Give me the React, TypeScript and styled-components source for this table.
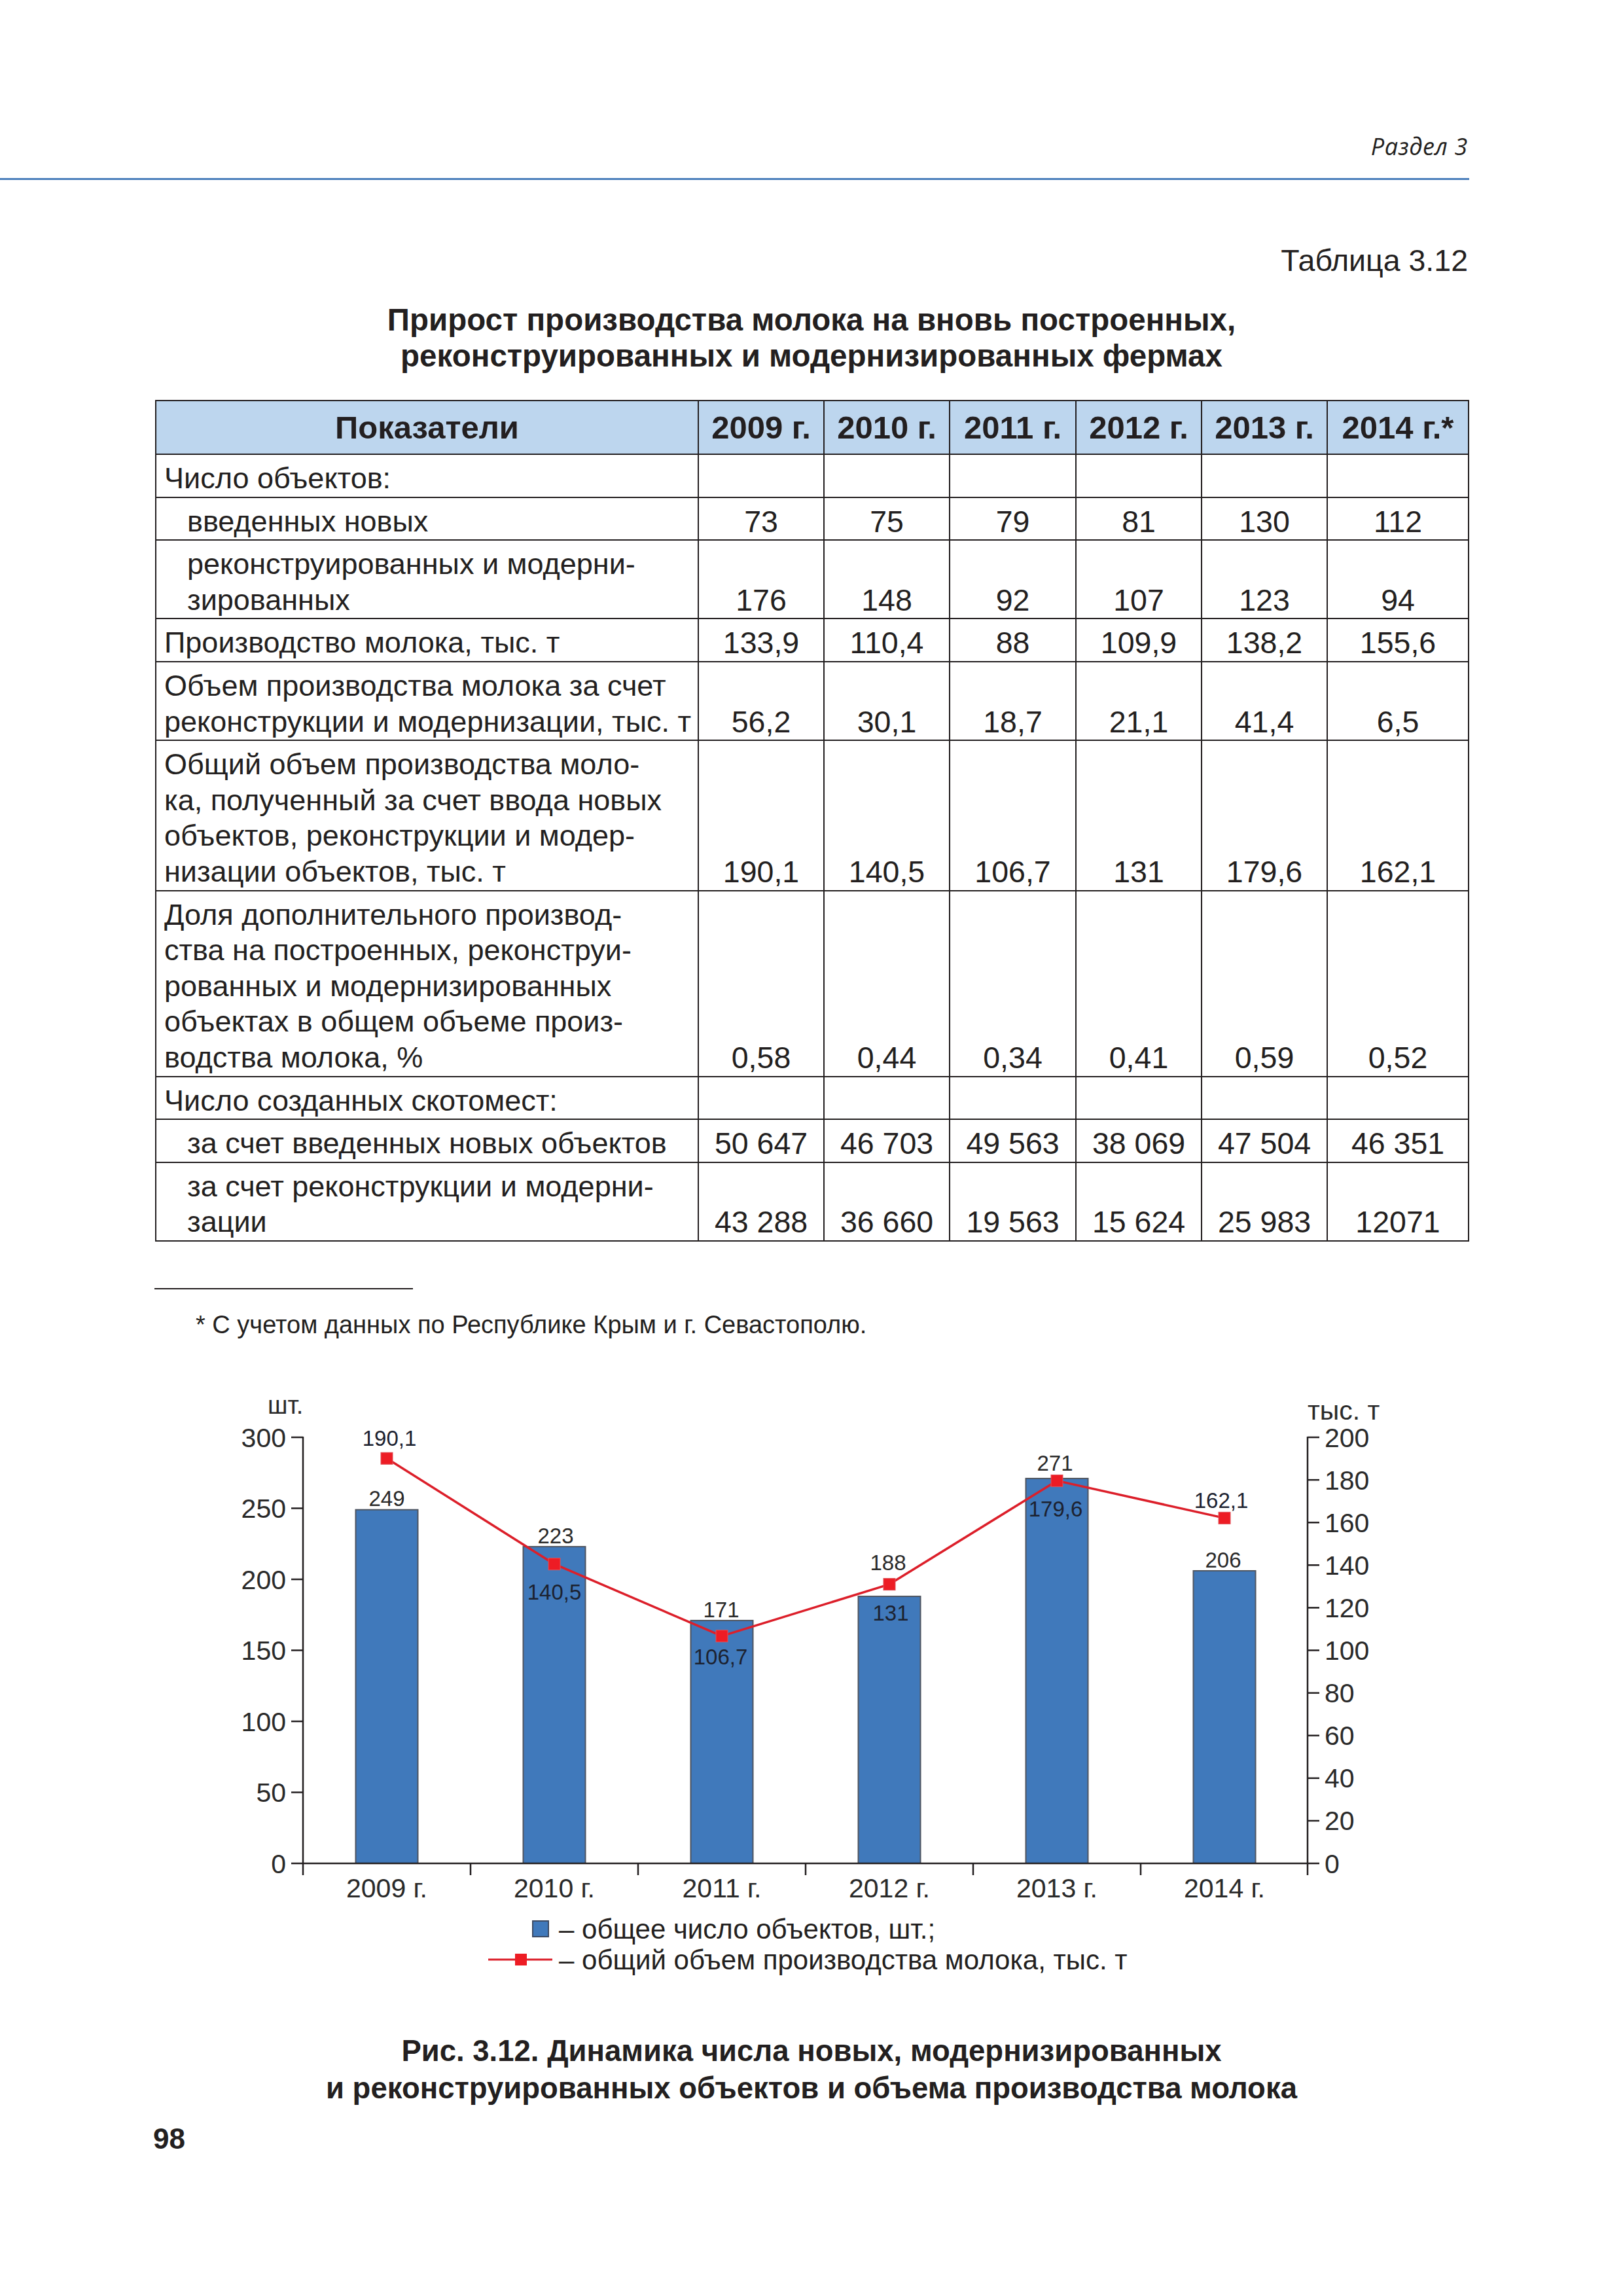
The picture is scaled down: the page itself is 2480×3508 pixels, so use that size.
import React from "react";
import styled, { createGlobalStyle } from "styled-components";

const GlobalStyle = createGlobalStyle`
  html, body { margin: 0; padding: 0; background: #ffffff; }
  body {
    font-family: "Liberation Sans", Arial, sans-serif;
    color: #231f20;
  }
`;

const Page = styled.div`
  width: 2480px;
  min-height: 3508px;
  background: #ffffff;
  box-sizing: border-box;
`;

const RunningHead = styled.header`
  width: 2245px;
  height: 272px;
  box-sizing: content-box;
  display: flex;
  justify-content: flex-end;
  align-items: flex-end;
  border-bottom: 3px solid #4a7ebb;
`;

const SectionLabel = styled.span`
  font-family: "Open Sans", "Liberation Sans", sans-serif;
  font-style: italic;
  font-size: 36px;
  line-height: 36px;
  letter-spacing: 0.6px;
  margin: 0 2px 30px 0;
  color: #231f20;
`;

const Content = styled.main`
  margin-left: 237px;
  width: 2006px;
  display: flex;
  flex-direction: column;
`;

const TableNumber = styled.div`
  margin-top: 101px;
  align-self: flex-end;
  font-size: 46.5px;
  line-height: 45px;
`;

const TableTitle = styled.h2`
  margin: 40px 0 0;
  text-align: center;
  font-size: 47.5px;
  line-height: 55px;
  font-weight: 700;
`;

const DataTable = styled.table`
  margin-top: 40px;
  width: 2006px;
  border-collapse: collapse;
  table-layout: fixed;
  font-size: 45px;
  line-height: 54.6px;
`;

const Col = styled.col<{ $w: number }>`
  width: ${(p) => p.$w}px;
`;

const HeadCell = styled.th`
  background: #bdd6ee;
  border: 2px solid #231f20;
  height: 80px;
  padding: 0;
  font-size: 49px;
  font-weight: 700;
  text-align: center;
  vertical-align: middle;
  white-space: nowrap;
`;

const LabelCell = styled.td<{ $indent?: boolean }>`
  border: 2px solid #231f20;
  padding: 9px 0 0 ${(p) => (p.$indent ? 47 : 12)}px;
  font-size: 45px;
  text-align: left;
  vertical-align: top;
  white-space: nowrap;
`;

const ValueCell = styled.td`
  border: 2px solid #231f20;
  padding: 0;
  font-size: 46.5px;
  text-align: center;
  vertical-align: bottom;
  white-space: nowrap;
`;

const FootnoteRule = styled.hr`
  margin: 71px 0 0 -1px;
  width: 395px;
  height: 2px;
  border: none;
  background: #231f20;
`;

const Footnote = styled.p`
  margin: 35px 0 0 62px;
  font-size: 38px;
  line-height: 38px;
`;

const ChartSvg = styled.svg`
  display: block;
  margin-top: 66px;
  font-family: "Liberation Sans", Arial, sans-serif;
`;

const Legend = styled.div`
  margin-top: 5px;
  display: grid;
  grid-template-columns: 607px auto;
  column-gap: 10px;
  align-items: center;
  font-size: 42px;
  line-height: 47px;
`;

const LegendMark = styled.span`
  justify-self: end;
  display: flex;
  align-items: center;
`;

const BarSwatch = styled.span`
  display: block;
  width: 22px;
  height: 22px;
  margin-right: 5px;
  background: #4079bb;
  border: 2px solid #3b4a63;
`;

const LegendText = styled.span`
  white-space: nowrap;
`;

const Caption = styled.h3`
  margin: 87px 0 0;
  text-align: center;
  font-size: 45.5px;
  line-height: 57px;
  font-weight: 700;
`;

const PageNumber = styled.div`
  margin: 27px 0 0 -3px;
  font-size: 44px;
  line-height: 44px;
  font-weight: 700;
`;

type Row = {
  label: string[];
  indent?: boolean;
  values: string[];
};

const years = ["2009 г.", "2010 г.", "2011 г.", "2012 г.", "2013 г.", "2014 г.*"];

const rows: Row[] = [
  { label: ["Число объектов:"], values: ["", "", "", "", "", ""] },
  { label: ["введенных новых"], indent: true, values: ["73", "75", "79", "81", "130", "112"] },
  {
    label: ["реконструированных и модерни-", "зированных"],
    indent: true,
    values: ["176", "148", "92", "107", "123", "94"],
  },
  { label: ["Производство молока, тыс. т"], values: ["133,9", "110,4", "88", "109,9", "138,2", "155,6"] },
  {
    label: ["Объем производства молока за счет", "реконструкции и модернизации, тыс. т"],
    values: ["56,2", "30,1", "18,7", "21,1", "41,4", "6,5"],
  },
  {
    label: [
      "Общий объем производства моло-",
      "ка, полученный за счет ввода новых",
      "объектов, реконструкции и модер-",
      "низации объектов, тыс. т",
    ],
    values: ["190,1", "140,5", "106,7", "131", "179,6", "162,1"],
  },
  {
    label: [
      "Доля дополнительного производ-",
      "ства на построенных, реконструи-",
      "рованных и модернизированных",
      "объектах в общем объеме произ-",
      "водства молока, %",
    ],
    values: ["0,58", "0,44", "0,34", "0,41", "0,59", "0,52"],
  },
  { label: ["Число созданных скотомест:"], values: ["", "", "", "", "", ""] },
  {
    label: ["за счет введенных новых объектов"],
    indent: true,
    values: ["50 647", "46 703", "49 563", "38 069", "47 504", "46 351"],
  },
  {
    label: ["за счет реконструкции и модерни-", "зации"],
    indent: true,
    values: ["43 288", "36 660", "19 563", "15 624", "25 983", "12071"],
  },
];

const colWidths = [829, 192, 192, 193, 192, 192, 216];

/* ---------- chart ---------- */
const X0 = 463;
const X1 = 1998;
const Y0 = 2848;
const KL = 651 / 300;
const KR = 651 / 200;
const CAT = 256;

const barValues = [249, 223, 171, 188, 271, 206];
const lineValues = [190.1, 140.5, 106.7, 131, 179.6, 162.1];
const barLabelPos = [
  { x: 591, y: 2302 },
  { x: 849, y: 2359 },
  { x: 1102, y: 2472 },
  { x: 1357, y: 2400 },
  { x: 1612, y: 2248 },
  { x: 1869, y: 2396 },
];
const lineLabelPos = [
  { x: 595, y: 2210, t: "190,1" },
  { x: 847, y: 2445, t: "140,5" },
  { x: 1101, y: 2544, t: "106,7" },
  { x: 1361, y: 2477, t: "131" },
  { x: 1613, y: 2318, t: "179,6" },
  { x: 1866, y: 2305, t: "162,1" },
];
const catLabels = ["2009 г.", "2010 г.", "2011 г.", "2012 г.", "2013 г.", "2014 г."];

const AXIS = "#231f20";
const LABEL = "#2a2a2a";

const Chart: React.FC = () => {
  const cx = (i: number) => X0 + CAT / 2 + CAT * i;
  const linePts = lineValues.map((v, i) => `${cx(i)},${Y0 - v * KR}`).join(" ");
  return (
    <ChartSvg width={2006} height={810} viewBox="237 2110 2006 810">
      {/* bars */}
      {barValues.map((v, i) => (
        <rect
          key={`b${i}`}
          x={cx(i) - 47.5}
          y={Y0 - v * KL}
          width={95}
          height={v * KL}
          fill="#4079bb"
          stroke="#4f5560"
          strokeWidth={2}
        />
      ))}
      {/* axes */}
      <line x1={X0} y1={2196} x2={X0} y2={Y0 + 18} stroke={AXIS} strokeWidth={2.5} />
      <line x1={X1} y1={2196} x2={X1} y2={Y0 + 18} stroke={AXIS} strokeWidth={2.5} />
      <line x1={X0} y1={Y0} x2={X1} y2={Y0} stroke={AXIS} strokeWidth={2.5} />
      {[0, 50, 100, 150, 200, 250, 300].map((v) => (
        <g key={`l${v}`}>
          <line x1={X0 - 18} y1={Y0 - v * KL} x2={X0} y2={Y0 - v * KL} stroke={AXIS} strokeWidth={2.5} />
          <text x={437} y={Y0 - v * KL + 14.5} fontSize={41} textAnchor="end" fill={LABEL}>
            {v}
          </text>
        </g>
      ))}
      {[0, 20, 40, 60, 80, 100, 120, 140, 160, 180, 200].map((v) => (
        <g key={`r${v}`}>
          <line x1={X1} y1={Y0 - v * KR} x2={X1 + 18} y2={Y0 - v * KR} stroke={AXIS} strokeWidth={2.5} />
          <text x={2024} y={Y0 - v * KR + 14.5} fontSize={41} fill={LABEL}>
            {v}
          </text>
        </g>
      ))}
      {[1, 2, 3, 4, 5].map((i) => (
        <line
          key={`t${i}`}
          x1={X0 + CAT * i}
          y1={Y0}
          x2={X0 + CAT * i}
          y2={Y0 + 18}
          stroke={AXIS}
          strokeWidth={2.5}
        />
      ))}
      <text x={409} y={2161} fontSize={38} fill={LABEL}>
        шт.
      </text>
      <text x={1998} y={2170} fontSize={41} fill={LABEL}>
        тыс. т
      </text>
      {catLabels.map((t, i) => (
        <text key={`c${i}`} x={cx(i)} y={2900} fontSize={41} textAnchor="middle" fill={LABEL}>
          {t}
        </text>
      ))}
      {/* line series */}
      <polyline points={linePts} fill="none" stroke="#dc1f2a" strokeWidth={3.5} strokeLinejoin="round" />
      {lineValues.map((v, i) => (
        <rect
          key={`m${i}`}
          x={cx(i) - 9}
          y={Y0 - v * KR - 9}
          width={18}
          height={18}
          fill="#ed1c24"
          stroke="#e0535a"
          strokeWidth={1}
        />
      ))}
      {barValues.map((v, i) => (
        <text
          key={`bl${i}`}
          x={barLabelPos[i].x}
          y={barLabelPos[i].y}
          fontSize={33}
          textAnchor="middle"
          fill={LABEL}
        >
          {v}
        </text>
      ))}
      {lineLabelPos.map((p, i) => (
        <text key={`ll${i}`} x={p.x} y={p.y} fontSize={33} textAnchor="middle" fill="#1c2230">
          {p.t}
        </text>
      ))}
    </ChartSvg>
  );
};

const LineSwatch: React.FC = () => (
  <svg width={98} height={20} viewBox="0 0 98 20">
    <line x1={0} y1={10} x2={98} y2={10} stroke="#dc1f2a" strokeWidth={3} />
    <rect x={41} y={1} width={18} height={18} fill="#ed1c24" />
  </svg>
);

export default function App() {
  return (
    <Page>
      <GlobalStyle />
      <RunningHead>
        <SectionLabel>Раздел 3</SectionLabel>
      </RunningHead>
      <Content>
        <TableNumber>Таблица 3.12</TableNumber>
        <TableTitle>
          Прирост производства молока на вновь построенных,
          <br />
          реконструированных и модернизированных фермах
        </TableTitle>
        <DataTable>
          <colgroup>
            {colWidths.map((w, i) => (
              <Col key={i} $w={w} />
            ))}
          </colgroup>
          <thead>
            <tr>
              <HeadCell>Показатели</HeadCell>
              {years.map((y) => (
                <HeadCell key={y}>{y}</HeadCell>
              ))}
            </tr>
          </thead>
          <tbody>
            {rows.map((r, ri) => (
              <tr key={ri}>
                <LabelCell $indent={r.indent}>
                  {r.label.map((l, li) => (
                    <React.Fragment key={li}>
                      {li > 0 && <br />}
                      {l}
                    </React.Fragment>
                  ))}
                </LabelCell>
                {r.values.map((v, vi) => (
                  <ValueCell key={vi}>{v}</ValueCell>
                ))}
              </tr>
            ))}
          </tbody>
        </DataTable>
        <FootnoteRule />
        <Footnote>* С учетом данных по Республике Крым и г. Севастополю.</Footnote>
        <Chart />
        <Legend>
          <LegendMark>
            <BarSwatch />
          </LegendMark>
          <LegendText>– общее число объектов, шт.;</LegendText>
          <LegendMark>
            <LineSwatch />
          </LegendMark>
          <LegendText>– общий объем производства молока, тыс. т</LegendText>
        </Legend>
        <Caption>
          Рис. 3.12. Динамика числа новых, модернизированных
          <br />и реконструированных объектов и объема производства молока
        </Caption>
        <PageNumber>98</PageNumber>
      </Content>
    </Page>
  );
}
